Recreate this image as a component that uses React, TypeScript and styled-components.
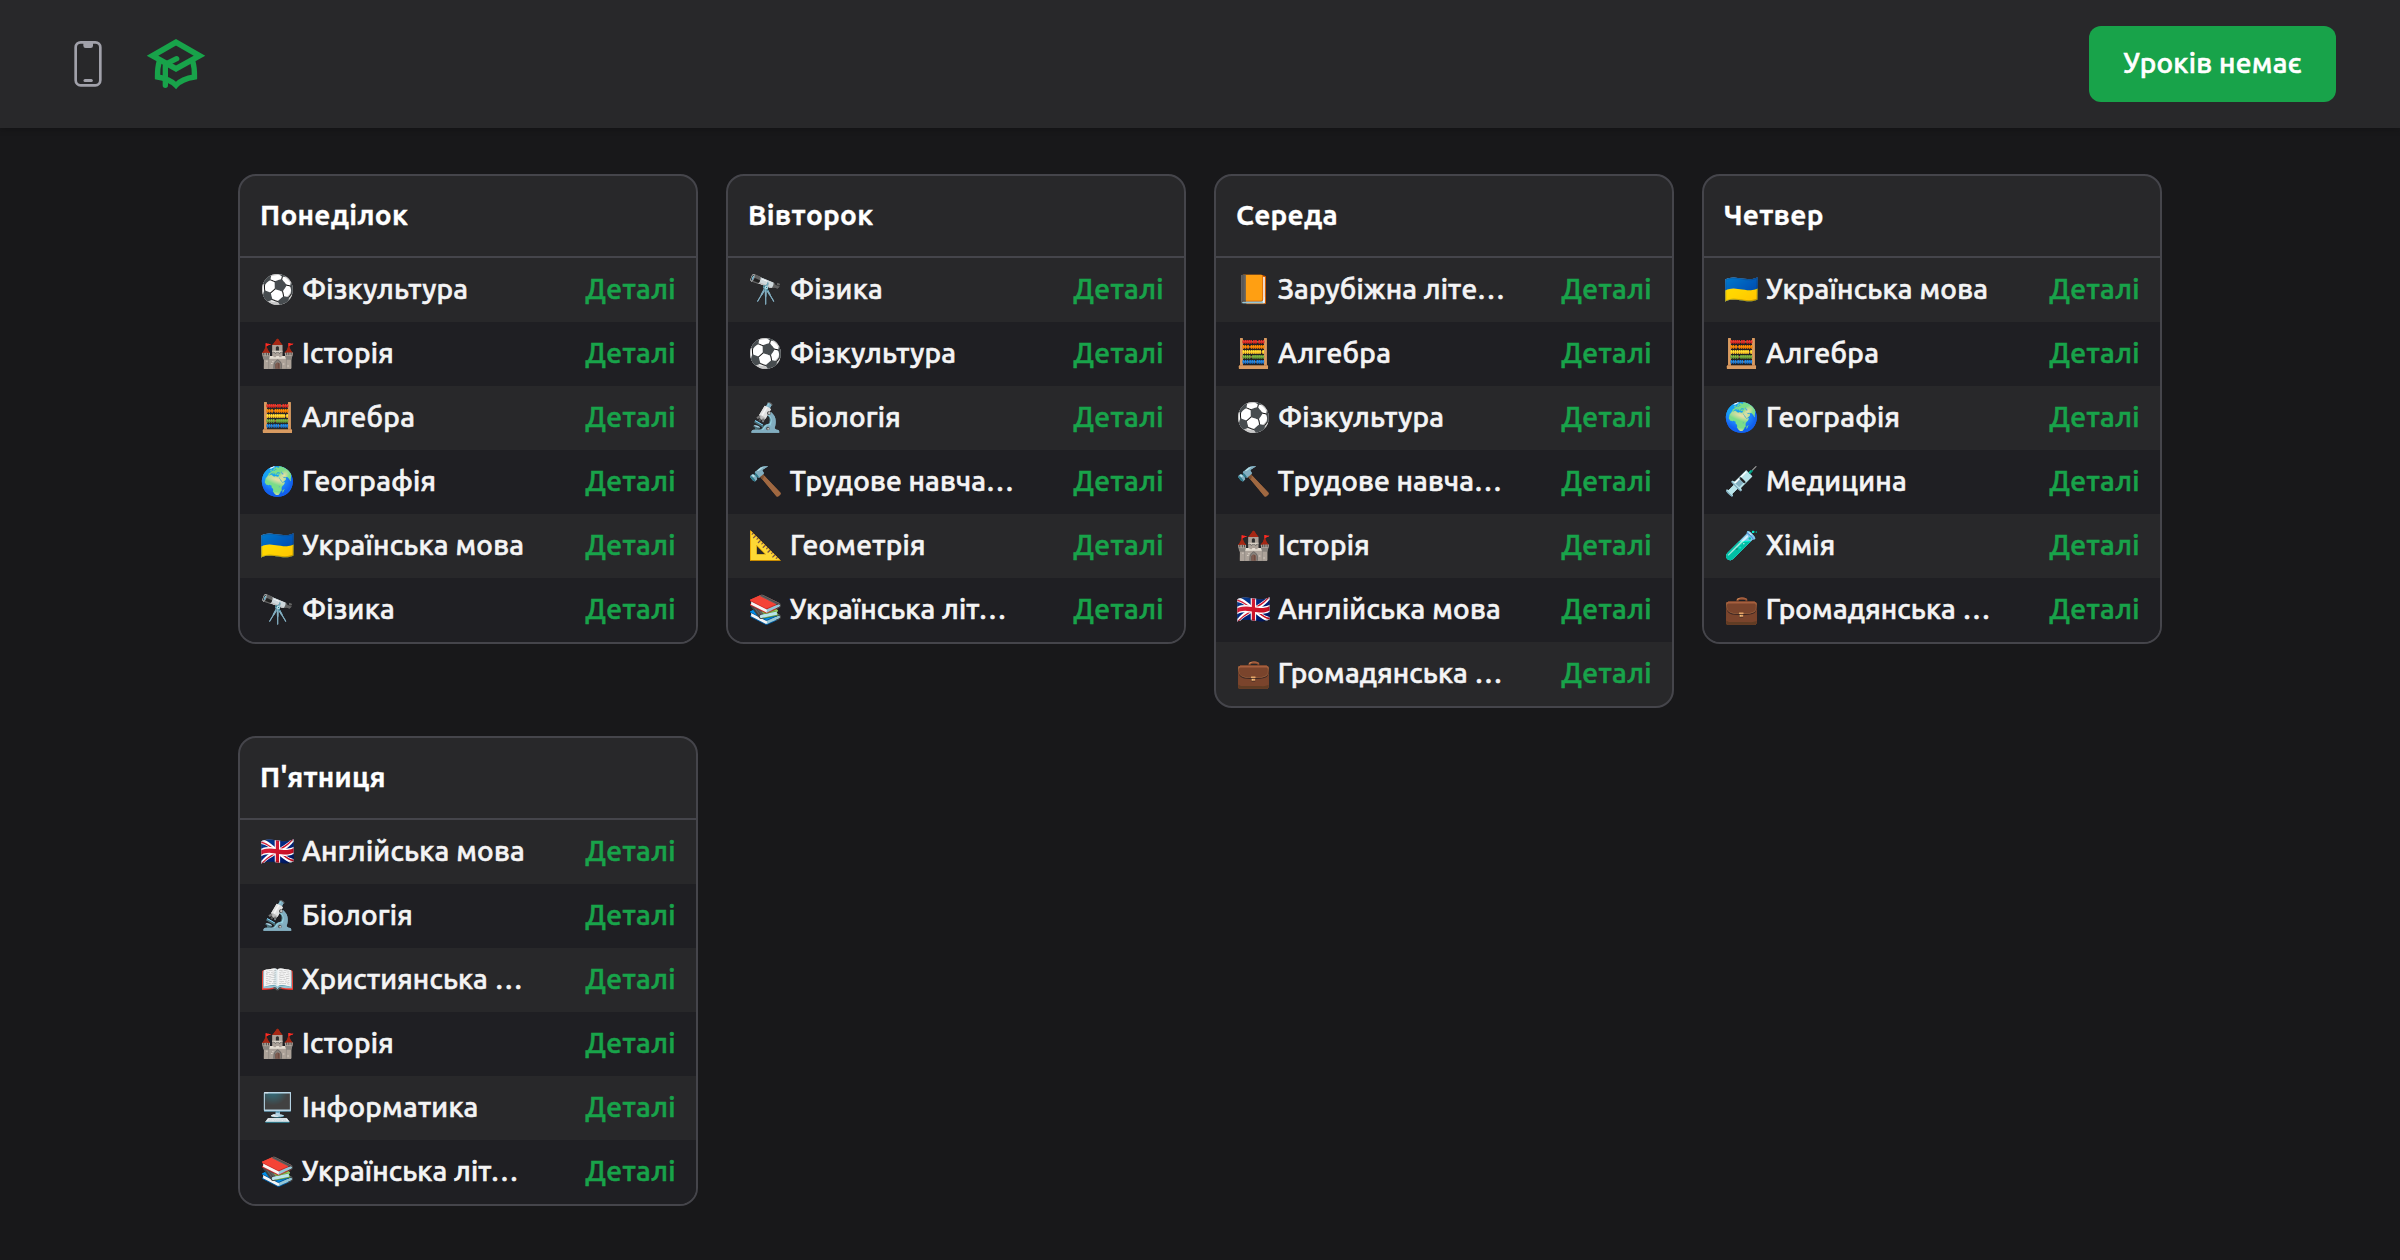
import React from 'react';
import styled, { createGlobalStyle } from 'styled-components';

const GlobalStyle = createGlobalStyle`
  * { box-sizing: border-box; }
  body {
    margin: 0;
    min-height: 1260px;
    background: #18181a;
    color: #f4f4f5;
    font-family: Ubuntu, 'Noto Sans', 'Noto Color Emoji', sans-serif;
    font-size: 28px;
  }
`;

const Header = styled.header`
  height: 128px;
  padding: 0 64px 0 74px;
  display: flex;
  align-items: center;
  justify-content: space-between;
  background: #28282a;
  box-shadow: 0 2px 6px rgba(0, 0, 0, 0.2);
`;

const Brand = styled.div`
  display: flex;
  align-items: center;
  gap: 45px;
`;

const PhoneIcon = styled.svg`
  display: block;
  width: 28px;
  height: 46px;
`;

const LogoIcon = styled.svg`
  display: block;
  width: 58px;
  height: 50px;
  overflow: visible;
`;

const StatusButton = styled.button`
  width: 247px;
  height: 76px;
  padding: 0 0 3px;
  border: 0;
  border-radius: 12px;
  background: #18a34a;
  color: #fff;
  font-family: Ubuntu, 'Noto Sans', sans-serif;
  font-size: 28px;
  font-weight: 500;
  letter-spacing: 0.25px;
  -webkit-text-stroke: 0.6px currentColor;
`;

const Board = styled.main`
  padding: 46px 238px;
  display: grid;
  grid-template-columns: repeat(4, 460px);
  gap: 28px;
  align-items: start;
`;

const Card = styled.section`
  border: 2px solid #45454b;
  border-radius: 18px;
  background: #28282a;
  overflow: hidden;
`;

const CardTitle = styled.h2`
  height: 82px;
  margin: 0;
  padding: 0 20px 4px;
  display: flex;
  align-items: center;
  border-bottom: 2px solid #45454b;
  color: #fff;
  font-size: 28px;
  font-weight: 700;
  letter-spacing: 0.25px;
  -webkit-text-stroke: 0.3px currentColor;
`;

const Lesson = styled.div`
  height: 64px;
  padding: 0 20px 2px;
  display: flex;
  align-items: center;
  font-weight: 500;
  -webkit-text-stroke: 0.6px currentColor;
  &:nth-child(odd) { background: #1f1f23; }
`;

const Subject = styled.span<{ $clipped: boolean }>`
  flex: 1;
  white-space: nowrap;
  letter-spacing: ${({ $clipped }) => ($clipped ? '0.14px' : '0.25px')};
`;

const Details = styled.a`
  padding-bottom: 2px;
  color: #18a34a;
  letter-spacing: 0.4px;
`;

const days: { title: string; lessons: [string, string][] }[] = [
  { title: 'Понеділок', lessons: [['⚽', 'Фізкультура'], ['🏰', 'Історія'], ['🧮', 'Алгебра'], ['🌍', 'Географія'], ['🇺🇦', 'Українська мова'], ['🔭', 'Фізика']] },
  { title: 'Вівторок', lessons: [['🔭', 'Фізика'], ['⚽', 'Фізкультура'], ['🔬', 'Біологія'], ['🔨', 'Трудове навча…'], ['📐', 'Геометрія'], ['📚', 'Українська літ…']] },
  { title: 'Середа', lessons: [['📙', 'Зарубіжна літе…'], ['🧮', 'Алгебра'], ['⚽', 'Фізкультура'], ['🔨', 'Трудове навча…'], ['🏰', 'Історія'], ['🇬🇧', 'Англійська мова'], ['💼', 'Громадянська …']] },
  { title: 'Четвер', lessons: [['🇺🇦', 'Українська мова'], ['🧮', 'Алгебра'], ['🌍', 'Географія'], ['💉', 'Медицина'], ['🧪', 'Хімія'], ['💼', 'Громадянська …']] },
  { title: "П'ятниця", lessons: [['🇬🇧', 'Англійська мова'], ['🔬', 'Біологія'], ['📖', 'Християнська …'], ['🏰', 'Історія'], ['🖥️', 'Інформатика'], ['📚', 'Українська літ…']] },
];

export default function App() {
  return (
    <>
      <GlobalStyle />
      <Header>
        <Brand>
          <PhoneIcon viewBox="102 123 84 138" fill="none">
            <rect x="107" y="127" width="74" height="129" rx="15" stroke="#a1a1aa" strokeWidth="8" />
            <path d="M130 127h29v10q0 7-7 7h-15q-7 0-7-7z" fill="#a1a1aa" />
            <path d="M135 241.500h19" stroke="#a1a1aa" strokeWidth="9" strokeLinecap="round" />
          </PhoneIcon>
          <LogoIcon viewBox="321 118 174 150" fill="none" stroke="#18a34a" strokeWidth="16">
            <path d="M408 128L337.500 168L408 207.500L478.500 168Z" strokeWidth="17" strokeMiterlimit="8" />
            <path d="M410 177L380 192Q376 194 376 200V257" strokeLinecap="round" />
            <path d="M358 184Q352 204 352.500 232Q388 237 408 257Q426 237 463.500 232Q464 204 458 184" />
          </LogoIcon>
        </Brand>
        <StatusButton>Уроків немає</StatusButton>
      </Header>
      <Board>
        {days.map((day) => (
          <Card key={day.title}>
            <CardTitle>{day.title}</CardTitle>
            {day.lessons.map(([emoji, name]) => (
              <Lesson key={name}>
                <Subject $clipped={name.endsWith('…')}>{emoji} {name}</Subject>
                <Details>Деталі</Details>
              </Lesson>
            ))}
          </Card>
        ))}
      </Board>
    </>
  );
}
